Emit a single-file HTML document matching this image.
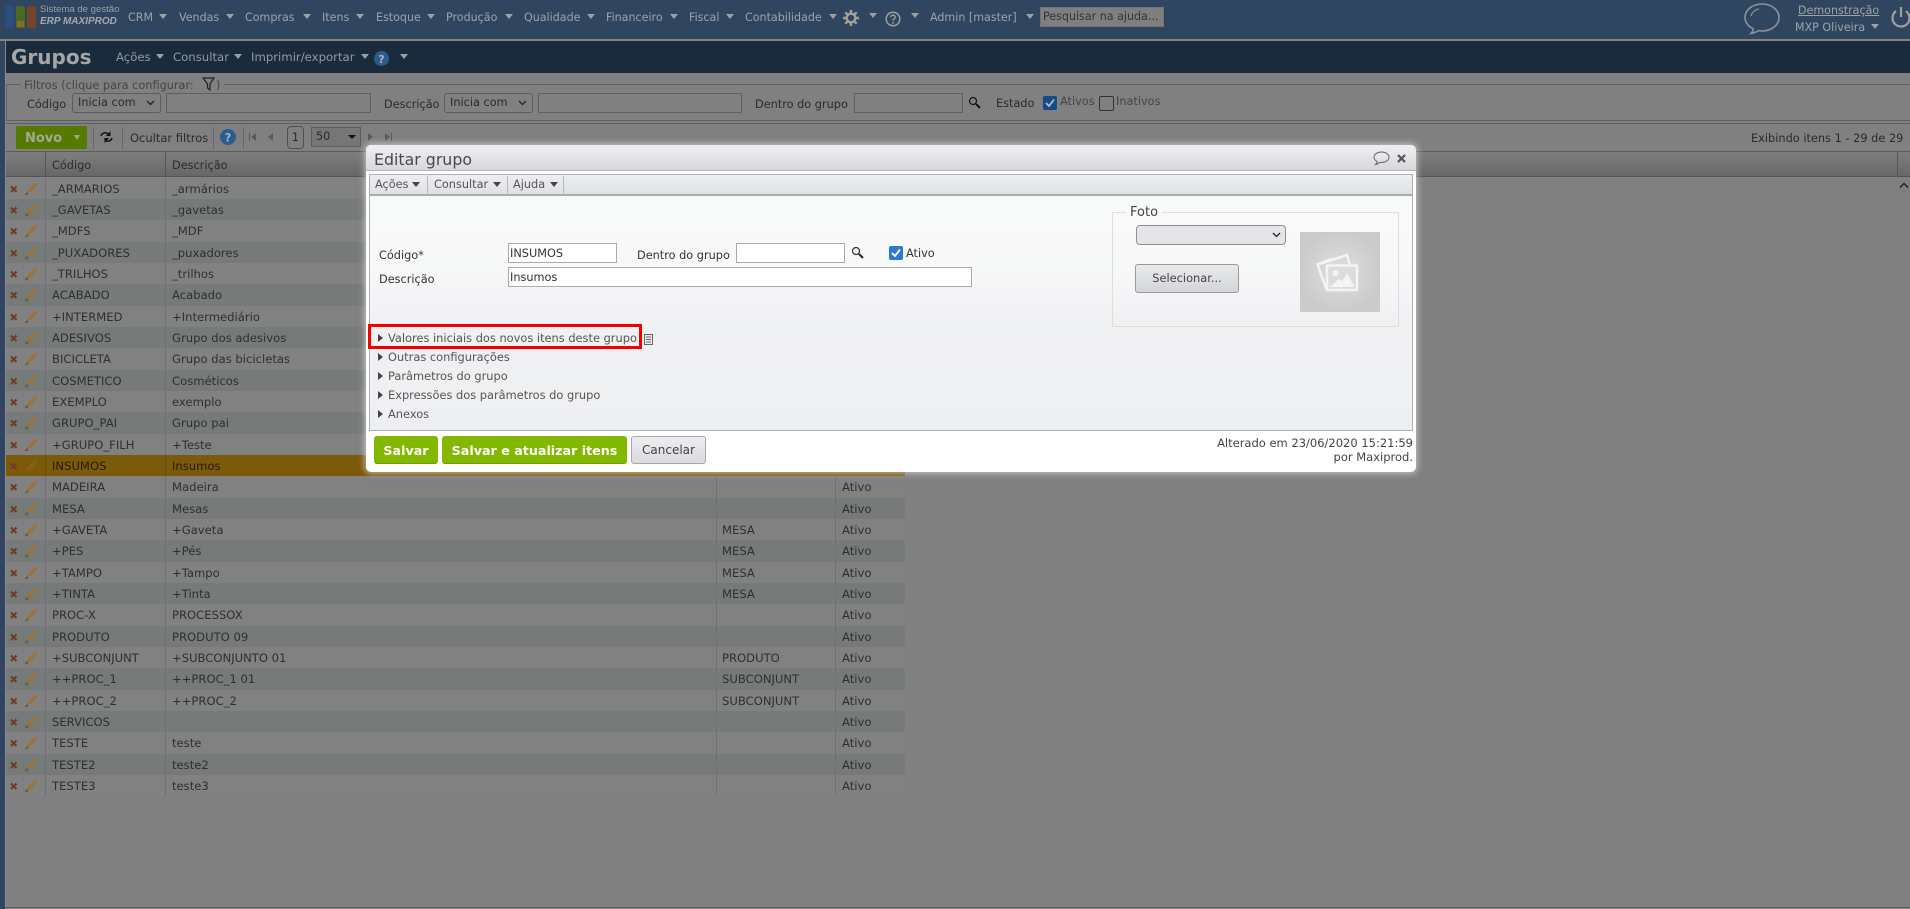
<!DOCTYPE html>
<html lang="pt"><head><meta charset="utf-8"><title>Grupos</title>
<style>
html,body{margin:0;padding:0;width:1910px;height:909px;overflow:hidden;background:#808080}
body{font:11.3px "DejaVu Sans","Liberation Sans",sans-serif;position:relative;color:#2a2a2a}
div,span,b,i,svg{position:absolute;white-space:nowrap}
.t{line-height:16px;height:16px}
.a{width:0;height:0;border-left:4px solid transparent;border-right:4px solid transparent;border-top:5px solid #a0a0a0}
.m{color:#9ea3a8;top:10px;font-size:11.1px}
.h{color:#94999e;top:49px;font-size:11.7px}
.in{background:#808080;border:1px solid #5f5f5f;box-sizing:border-box;height:20px}
.sel{background:#808080;border:1px solid #5c5c5c;border-radius:3px;box-sizing:border-box;height:20px;color:#2a2a2a;line-height:17px;padding-left:5px}
.sep{width:1px;background:#666;top:127px;height:22px}
.r{left:6px;width:899px;background:#818181}
.o{background:#767a78}
.r span{font-size:11.6px;color:#2f2f2f;top:50%;margin-top:-8px;line-height:16px}
.c1{left:46px}.c2{left:166px}.c3{left:716px}.c4{left:836px}
.r s{position:absolute;top:0;bottom:0;width:1px;background:#6f706f}
.r svg{top:4px}
.dt{color:#555;line-height:16px;height:16px}
.di{background:#fff;border:1px solid #aaa;box-sizing:border-box;height:20px;color:#333;line-height:19px;padding-left:1px}
.ac{left:22px;color:#555;font-size:11.4px;line-height:16px;height:16px}
.tr{width:0;height:0;border-top:4px solid transparent;border-bottom:4px solid transparent;border-left:5px solid #444;left:12px}
.g{background:#82b900;border-radius:3px;color:#fff;font-weight:bold;font-size:12.7px;text-align:center;height:28px;line-height:29px;top:291px;box-sizing:border-box;border-bottom:1px solid #6e9c00}
</style></head><body>

<svg width="0" height="0" style="left:0;top:0"><defs>
<g id="x"><path d="M1 1.500L6.500 7M6.500 1.500L1 7" stroke="#6e3a2c" stroke-width="2" fill="none"/></g>
<g id="p"><path d="M1.500 12.500L2.500 10L11 1.300L13 3.300L4.500 11.800Z" fill="#a0722c"/><path d="M1 13.500L2.200 10L4.700 12.300Z" fill="#5f5645"/></g>
<g id="i"><use href="#x" y="3"/><use href="#p" x="14" y="0"/></g>
</defs></svg>

<!-- top bar -->
<div style="left:0;top:0;width:1910px;height:39px;background:#2f4560"></div>
<div style="left:0;top:39px;width:1910px;height:2px;background:#858585"></div>
<div style="left:0;top:41px;width:5px;height:868px;background:#2f4560"></div>
<div style="left:5px;top:41px;width:1px;height:868px;background:#8a8a8a"></div>
<svg style="left:5px;top:6px" width="32" height="23"><rect width="9" height="22" rx="2" fill="#2a4f7e"/><rect x="11" width="9" height="22" rx="2" fill="#4a6b1e"/><rect x="22" width="9" height="22" rx="2" fill="#75452b"/><rect x="12" y="15" width="7" height="6" fill="#8a6d1e"/></svg>
<div class="t" style="left:40px;top:2px;color:#9aa0a6;font-size:9.600px;font-family:'Liberation Sans',sans-serif">Sistema de gestão</div>
<div class="t" style="left:40px;top:14px;color:#a4a8ac;font-size:10px;font-weight:bold;font-style:italic;font-family:'Liberation Sans',sans-serif">ERP MAXIPROD</div>
<div class="t m" style="left:128px">CRM</div><div class="a" style="left:159px;top:14px"></div>
<div class="t m" style="left:179px">Vendas</div><div class="a" style="left:226px;top:14px"></div>
<div class="t m" style="left:245px">Compras</div><div class="a" style="left:303px;top:14px"></div>
<div class="t m" style="left:322px">Itens</div><div class="a" style="left:356px;top:14px"></div>
<div class="t m" style="left:376px">Estoque</div><div class="a" style="left:427px;top:14px"></div>
<div class="t m" style="left:446px">Produção</div><div class="a" style="left:505px;top:14px"></div>
<div class="t m" style="left:524px">Qualidade</div><div class="a" style="left:587px;top:14px"></div>
<div class="t m" style="left:606px">Financeiro</div><div class="a" style="left:670px;top:14px"></div>
<div class="t m" style="left:689px">Fiscal</div><div class="a" style="left:726px;top:14px"></div>
<div class="t m" style="left:745px">Contabilidade</div><div class="a" style="left:829px;top:14px"></div>
<svg style="left:843px;top:10px" width="16" height="16" viewBox="0 0 16 16"><circle cx="8" cy="8" r="4.300" fill="none" stroke="#a0a0a0" stroke-width="2.400"/><path d="M8 0V3M8 13V16M0 8H3M13 8H16M2.300 2.300L4.400 4.400M11.600 11.600L13.700 13.700M13.700 2.300L11.600 4.400M4.400 11.600L2.300 13.700" stroke="#a0a0a0" stroke-width="2.400"/></svg>
<div class="a" style="left:869px;top:13px"></div>
<svg style="left:885px;top:11px" width="16" height="16" viewBox="0 0 16 16"><circle cx="8" cy="8" r="6.800" fill="none" stroke="#a0a0a0" stroke-width="1.500"/><path d="M5.800 6.200C5.900 3.500 10.200 3.600 10.200 6.100C10.200 7.800 8 7.800 8 9.800" fill="none" stroke="#a0a0a0" stroke-width="1.400"/><rect x="7.200" y="11" width="1.600" height="1.600" fill="#a0a0a0"/></svg>
<div class="a" style="left:911px;top:13px"></div>
<div class="t m" style="left:930px">Admin [master]</div><div class="a" style="left:1026px;top:14px"></div>
<div style="left:1040px;top:7px;width:124px;height:20px;background:#7f7f7f;border:1px solid #6d7680;box-sizing:border-box;color:#333;line-height:18px;padding-left:2px;font-size:11.100px">Pesquisar na ajuda...</div>
<svg style="left:1743px;top:2px" width="38" height="33" viewBox="0 0 38 33"><path d="M19 2C9.500 2 2 8 2 15.500C2 20.500 5.500 24.500 10 26.500C10.500 28.500 9.500 30 8 31.500C11.500 31 14 29.500 16 28.500C17 28.800 18 29 19 29C28.500 29 36 23 36 15.500C36 8 28.500 2 19 2Z" fill="none" stroke="#8c9298" stroke-width="1.600"/><path d="M8 14C9 10 12.500 7.500 16 7" fill="none" stroke="#8c9298" stroke-width="1.200"/></svg>
<div class="t" style="left:1798px;top:3px;color:#9ea3a8;font-size:11.100px;text-decoration:underline">Demonstração</div>
<div class="t" style="left:1795px;top:20px;color:#9ea3a8;font-size:11.100px">MXP Oliveira</div><div class="a" style="left:1871px;top:24px"></div>
<svg style="left:1891px;top:5px" width="19" height="24" viewBox="0 0 19 24"><path d="M5 6C2.500 8 1.500 10 1.500 13C1.500 18 5.500 21.500 10 21.500C14.500 21.500 18.500 18 18.500 13C18.500 10 17.500 8 15 6" fill="none" stroke="#a0a0a0" stroke-width="2.200"/><path d="M10 2V12" stroke="#a0a0a0" stroke-width="2.200"/></svg>

<!-- page header -->
<div style="left:6px;top:41px;width:1904px;height:32px;background:#1a2b3c"></div>
<div style="left:11px;top:44px;color:#a6a6a6;font-size:20px;font-weight:bold;line-height:26px">Grupos</div>
<div class="t h" style="left:116px">Ações</div><div class="a" style="left:156px;top:54px"></div>
<div class="t h" style="left:173px">Consultar</div><div class="a" style="left:234px;top:54px"></div>
<div class="t h" style="left:251px">Imprimir/exportar</div><div class="a" style="left:361px;top:54px"></div>
<svg style="left:374px;top:51px" width="15" height="15"><circle cx="7.500" cy="7.500" r="7.500" fill="#2a5c8e"/><text x="7.500" y="12" font-size="11" font-weight="bold" text-anchor="middle" fill="#a8b4c0" font-family="DejaVu Sans">?</text></svg>
<div class="a" style="left:400px;top:54px"></div>

<!-- filters -->
<div style="left:6px;top:84px;width:1904px;height:1px;background:#5f5f5f"></div>
<div style="left:6px;top:84px;width:1px;height:36px;background:#5f5f5f"></div>
<div style="left:6px;top:120px;width:1904px;height:1px;background:#5f5f5f"></div>
<div style="left:6px;top:123px;width:1904px;height:1px;background:#5f5f5f"></div>
<div class="t" style="left:21px;top:78px;background:#808080;padding:0 3px;color:#444;width:197px">Filtros (clique para configurar:</div>
<svg style="left:202px;top:77px" width="13" height="14" viewBox="0 0 13 14"><path d="M1 1H12L8 7V13L5.500 11V7Z" fill="none" stroke="#222" stroke-width="1.200"/></svg>
<div class="t" style="left:216px;top:78px;color:#444">)</div>
<div class="t" style="left:27px;top:97px">Código</div>
<div class="sel" style="left:72px;top:93px;width:89px">Inicia com</div>
<svg style="left:146px;top:100px" width="9" height="6"><path d="M1 1L4.500 4.500L8 1" fill="none" stroke="#222" stroke-width="1.300"/></svg>
<div class="in" style="left:166px;top:93px;width:205px"></div>
<div class="t" style="left:384px;top:97px">Descrição</div>
<div class="sel" style="left:444px;top:93px;width:89px">Inicia com</div>
<svg style="left:518px;top:100px" width="9" height="6"><path d="M1 1L4.500 4.500L8 1" fill="none" stroke="#222" stroke-width="1.300"/></svg>
<div class="in" style="left:538px;top:93px;width:204px"></div>
<div class="t" style="left:755px;top:97px">Dentro do grupo</div>
<div class="in" style="left:854px;top:93px;width:109px"></div>
<svg style="left:968px;top:96px" width="13" height="13" viewBox="0 0 13 13"><circle cx="5" cy="5" r="3.500" fill="none" stroke="#111" stroke-width="1.200"/><path d="M8 8L12 12" stroke="#111" stroke-width="2"/></svg>
<div class="t" style="left:996px;top:96px">Estado</div>
<svg style="left:1043px;top:96px" width="14" height="14"><rect width="14" height="14" rx="2" fill="#164a8a"/><path d="M3 7L6 10L11 3.500" fill="none" stroke="#bbb" stroke-width="1.800"/></svg>
<div class="t" style="left:1060px;top:94px;color:#444">Ativos</div>
<div style="left:1099px;top:96px;width:13px;height:13px;border:1px solid #333;border-radius:2px;box-sizing:content-box"></div>
<div class="t" style="left:1116px;top:94px;color:#444">Inativos</div>

<!-- toolbar -->
<div style="left:16px;top:126px;width:71px;height:23px;background:#567a00;border-radius:2px"></div>
<div class="t" style="left:25px;top:131px;color:#a3a79a;font-weight:bold;font-size:13px">Novo</div>
<div style="left:74px;top:135px;width:0;height:0;border-left:3px solid transparent;border-right:3px solid transparent;border-top:5px solid #a0a890"></div>
<div class="sep" style="left:93px"></div>
<svg style="left:100px;top:131px" width="13" height="12" viewBox="0 0 13 12"><path d="M1 5C2 1.500 6 1 8 3M12 7C11 10.500 7 11 5 9" fill="none" stroke="#111" stroke-width="1.500"/><path d="M9.500 0V5H5ZM3.500 12V7H8Z" fill="#111" transform="translate(1 0)"/></svg>
<div class="sep" style="left:122px"></div>
<div class="t" style="left:130px;top:130px;font-size:11.500px">Ocultar filtros</div>
<div class="sep" style="left:213px"></div>
<svg style="left:220px;top:129px" width="16" height="16"><circle cx="8" cy="8" r="8" fill="#2a5c8e"/><text x="8" y="12.500" font-size="11.500" font-weight="bold" text-anchor="middle" fill="#a8b4c0" font-family="DejaVu Sans">?</text></svg>
<div class="sep" style="left:243px"></div>
<svg style="left:249px;top:132px" width="26" height="10"><rect x="0" y="1" width="1" height="8" fill="#5a5a5a"/><path d="M7 1V9L2 5ZM24 1V9L19 5Z" fill="#5a5a5a"/></svg>
<div style="left:287px;top:126px;width:17px;height:23px;border:1px solid #505050;border-radius:4px;box-sizing:border-box;text-align:center;line-height:22px">1</div>
<div style="left:311px;top:127px;width:50px;height:20px;background:#767676;border:1px solid #5c5c5c;box-sizing:border-box;padding-left:4px;line-height:17px">50</div>
<div style="left:348px;top:135px;width:0;height:0;border-left:4px solid transparent;border-right:4px solid transparent;border-top:4px solid #111"></div>
<svg style="left:367px;top:132px" width="26" height="10"><path d="M1 1V9L6 5ZM18 1V9L23 5Z" fill="#5a5a5a"/><rect x="24" y="1" width="1" height="8" fill="#5a5a5a"/></svg>
<div class="t" style="left:1751px;top:130px;font-size:11.350px">Exibindo itens 1 - 29 de 29</div>

<!-- table header -->
<div style="left:6px;top:151px;width:1904px;height:26px;background:linear-gradient(#7e7e7e,#676767);border-top:1px solid #5c5c5c;border-bottom:1px solid #555;box-sizing:border-box"></div>
<div style="left:45px;top:151px;width:1px;height:26px;background:#565656"></div>
<div style="left:165px;top:151px;width:1px;height:26px;background:#565656"></div>
<div style="left:1897px;top:151px;width:1px;height:26px;background:#565656"></div>
<div class="t" style="left:52px;top:158px;font-size:11.300px">Código</div>
<div class="t" style="left:172px;top:158px;font-size:11.300px">Descrição</div>
<svg style="left:1899px;top:182px" width="10" height="7"><path d="M1 5.500L5 1.500L9 5.500" fill="none" stroke="#222" stroke-width="1.500"/></svg>
<div style="left:5px;top:907px;width:1905px;height:1px;background:#5a6068"></div>

<!-- rows -->
<div class="r" style="top:178px;height:21px"><svg style="left:4px" width="34" height="15"><use href="#i"/></svg><s style="left:39px"></s><s style="left:159px"></s><s style="left:710px"></s><s style="left:829px"></s><span class="c1">_ARMARIOS</span><span class="c2">_armários</span></div>
<div class="r o" style="top:199px;height:21px"><svg style="left:4px" width="34" height="15"><use href="#i"/></svg><s style="left:39px"></s><s style="left:159px"></s><s style="left:710px"></s><s style="left:829px"></s><span class="c1">_GAVETAS</span><span class="c2">_gavetas</span></div>
<div class="r" style="top:220px;height:22px"><svg style="left:4px" width="34" height="15"><use href="#i"/></svg><s style="left:39px"></s><s style="left:159px"></s><s style="left:710px"></s><s style="left:829px"></s><span class="c1">_MDFS</span><span class="c2">_MDF</span></div>
<div class="r o" style="top:242px;height:21px"><svg style="left:4px" width="34" height="15"><use href="#i"/></svg><s style="left:39px"></s><s style="left:159px"></s><s style="left:710px"></s><s style="left:829px"></s><span class="c1">_PUXADORES</span><span class="c2">_puxadores</span></div>
<div class="r" style="top:263px;height:21px"><svg style="left:4px" width="34" height="15"><use href="#i"/></svg><s style="left:39px"></s><s style="left:159px"></s><s style="left:710px"></s><s style="left:829px"></s><span class="c1">_TRILHOS</span><span class="c2">_trilhos</span></div>
<div class="r o" style="top:284px;height:22px"><svg style="left:4px" width="34" height="15"><use href="#i"/></svg><s style="left:39px"></s><s style="left:159px"></s><s style="left:710px"></s><s style="left:829px"></s><span class="c1">ACABADO</span><span class="c2">Acabado</span></div>
<div class="r" style="top:306px;height:21px"><svg style="left:4px" width="34" height="15"><use href="#i"/></svg><s style="left:39px"></s><s style="left:159px"></s><s style="left:710px"></s><s style="left:829px"></s><span class="c1">+INTERMED</span><span class="c2">+Intermediário</span></div>
<div class="r o" style="top:327px;height:21px"><svg style="left:4px" width="34" height="15"><use href="#i"/></svg><s style="left:39px"></s><s style="left:159px"></s><s style="left:710px"></s><s style="left:829px"></s><span class="c1">ADESIVOS</span><span class="c2">Grupo dos adesivos</span></div>
<div class="r" style="top:348px;height:22px"><svg style="left:4px" width="34" height="15"><use href="#i"/></svg><s style="left:39px"></s><s style="left:159px"></s><s style="left:710px"></s><s style="left:829px"></s><span class="c1">BICICLETA</span><span class="c2">Grupo das bicicletas</span></div>
<div class="r o" style="top:370px;height:21px"><svg style="left:4px" width="34" height="15"><use href="#i"/></svg><s style="left:39px"></s><s style="left:159px"></s><s style="left:710px"></s><s style="left:829px"></s><span class="c1">COSMETICO</span><span class="c2">Cosméticos</span></div>
<div class="r" style="top:391px;height:21px"><svg style="left:4px" width="34" height="15"><use href="#i"/></svg><s style="left:39px"></s><s style="left:159px"></s><s style="left:710px"></s><s style="left:829px"></s><span class="c1">EXEMPLO</span><span class="c2">exemplo</span></div>
<div class="r o" style="top:412px;height:22px"><svg style="left:4px" width="34" height="15"><use href="#i"/></svg><s style="left:39px"></s><s style="left:159px"></s><s style="left:710px"></s><s style="left:829px"></s><span class="c1">GRUPO_PAI</span><span class="c2">Grupo pai</span></div>
<div class="r" style="top:434px;height:21px"><svg style="left:4px" width="34" height="15"><use href="#i"/></svg><s style="left:39px"></s><s style="left:159px"></s><s style="left:710px"></s><s style="left:829px"></s><span class="c1">+GRUPO_FILH</span><span class="c2">+Teste</span></div>
<div class="r" style="top:455px;height:21px;background:#7c5a0c"><svg style="left:4px" width="34" height="15"><use href="#x" y="3"/><use href="#p" x="14" opacity=".35"/></svg><s style="left:39px;background:#6a4d0a"></s><s style="left:159px;background:#6a4d0a"></s><span class="c1" style="color:#241a04">INSUMOS</span><span class="c2" style="color:#241a04">Insumos</span></div>
<div class="r" style="top:476px;height:22px"><svg style="left:4px" width="34" height="15"><use href="#i"/></svg><s style="left:39px"></s><s style="left:159px"></s><s style="left:710px"></s><s style="left:829px"></s><span class="c1">MADEIRA</span><span class="c2">Madeira</span><span class="c4">Ativo</span></div>
<div class="r o" style="top:498px;height:21px"><svg style="left:4px" width="34" height="15"><use href="#i"/></svg><s style="left:39px"></s><s style="left:159px"></s><s style="left:710px"></s><s style="left:829px"></s><span class="c1">MESA</span><span class="c2">Mesas</span><span class="c4">Ativo</span></div>
<div class="r" style="top:519px;height:21px"><svg style="left:4px" width="34" height="15"><use href="#i"/></svg><s style="left:39px"></s><s style="left:159px"></s><s style="left:710px"></s><s style="left:829px"></s><span class="c1">+GAVETA</span><span class="c2">+Gaveta</span><span class="c3">MESA</span><span class="c4">Ativo</span></div>
<div class="r o" style="top:540px;height:22px"><svg style="left:4px" width="34" height="15"><use href="#i"/></svg><s style="left:39px"></s><s style="left:159px"></s><s style="left:710px"></s><s style="left:829px"></s><span class="c1">+PES</span><span class="c2">+Pés</span><span class="c3">MESA</span><span class="c4">Ativo</span></div>
<div class="r" style="top:562px;height:21px"><svg style="left:4px" width="34" height="15"><use href="#i"/></svg><s style="left:39px"></s><s style="left:159px"></s><s style="left:710px"></s><s style="left:829px"></s><span class="c1">+TAMPO</span><span class="c2">+Tampo</span><span class="c3">MESA</span><span class="c4">Ativo</span></div>
<div class="r o" style="top:583px;height:21px"><svg style="left:4px" width="34" height="15"><use href="#i"/></svg><s style="left:39px"></s><s style="left:159px"></s><s style="left:710px"></s><s style="left:829px"></s><span class="c1">+TINTA</span><span class="c2">+Tinta</span><span class="c3">MESA</span><span class="c4">Ativo</span></div>
<div class="r" style="top:604px;height:22px"><svg style="left:4px" width="34" height="15"><use href="#i"/></svg><s style="left:39px"></s><s style="left:159px"></s><s style="left:710px"></s><s style="left:829px"></s><span class="c1">PROC-X</span><span class="c2">PROCESSOX</span><span class="c4">Ativo</span></div>
<div class="r o" style="top:626px;height:21px"><svg style="left:4px" width="34" height="15"><use href="#i"/></svg><s style="left:39px"></s><s style="left:159px"></s><s style="left:710px"></s><s style="left:829px"></s><span class="c1">PRODUTO</span><span class="c2">PRODUTO 09</span><span class="c4">Ativo</span></div>
<div class="r" style="top:647px;height:21px"><svg style="left:4px" width="34" height="15"><use href="#i"/></svg><s style="left:39px"></s><s style="left:159px"></s><s style="left:710px"></s><s style="left:829px"></s><span class="c1">+SUBCONJUNT</span><span class="c2">+SUBCONJUNTO 01</span><span class="c3">PRODUTO</span><span class="c4">Ativo</span></div>
<div class="r o" style="top:668px;height:22px"><svg style="left:4px" width="34" height="15"><use href="#i"/></svg><s style="left:39px"></s><s style="left:159px"></s><s style="left:710px"></s><s style="left:829px"></s><span class="c1">++PROC_1</span><span class="c2">++PROC_1 01</span><span class="c3">SUBCONJUNT</span><span class="c4">Ativo</span></div>
<div class="r" style="top:690px;height:21px"><svg style="left:4px" width="34" height="15"><use href="#i"/></svg><s style="left:39px"></s><s style="left:159px"></s><s style="left:710px"></s><s style="left:829px"></s><span class="c1">++PROC_2</span><span class="c2">++PROC_2</span><span class="c3">SUBCONJUNT</span><span class="c4">Ativo</span></div>
<div class="r o" style="top:711px;height:21px"><svg style="left:4px" width="34" height="15"><use href="#i"/></svg><s style="left:39px"></s><s style="left:159px"></s><s style="left:710px"></s><s style="left:829px"></s><span class="c1">SERVICOS</span><span class="c4">Ativo</span></div>
<div class="r" style="top:732px;height:22px"><svg style="left:4px" width="34" height="15"><use href="#i"/></svg><s style="left:39px"></s><s style="left:159px"></s><s style="left:710px"></s><s style="left:829px"></s><span class="c1">TESTE</span><span class="c2">teste</span><span class="c4">Ativo</span></div>
<div class="r o" style="top:754px;height:21px"><svg style="left:4px" width="34" height="15"><use href="#i"/></svg><s style="left:39px"></s><s style="left:159px"></s><s style="left:710px"></s><s style="left:829px"></s><span class="c1">TESTE2</span><span class="c2">teste2</span><span class="c4">Ativo</span></div>
<div class="r" style="top:775px;height:21px"><svg style="left:4px" width="34" height="15"><use href="#i"/></svg><s style="left:39px"></s><s style="left:159px"></s><s style="left:710px"></s><s style="left:829px"></s><span class="c1">TESTE3</span><span class="c2">teste3</span><span class="c4">Ativo</span></div>

<!-- modal -->
<div style="left:366px;top:145px;width:1050px;height:327px;background:#fff;border-radius:5px;box-shadow:0 0 7px 1px rgba(225,225,225,.75);overflow:hidden">
  <div style="left:0;top:0;width:1050px;height:25px;background:linear-gradient(#eef0f2,#d6d8dc);border-bottom:1px solid #b2b5ba"></div>
  <div style="left:8px;top:3px;color:#4a4a4a;font-size:15.800px;line-height:24px">Editar grupo</div>
  <svg style="left:1007px;top:6px" width="17" height="15" viewBox="0 0 17 15"><path d="M8.500 1C4.500 1 1 3.200 1 6.200C1 8 2.200 9.500 4 10.300C4 11.700 3.400 12.700 2.500 13.500C4.300 13.200 5.700 12.300 6.500 11.400L8.500 11.500C12.500 11.500 16 9.200 16 6.200C16 3.200 12.500 1 8.500 1Z" fill="none" stroke="#666" stroke-width="1"/></svg>
  <svg style="left:1031px;top:9px" width="9" height="9"><path d="M1 1L8 8M8 1L1 8" stroke="#555" stroke-width="2.200"/></svg>

  <!-- inner box -->
  <div style="left:3px;top:29px;width:1044px;height:257px;border:1px solid #aeb2b8;box-sizing:border-box;background:linear-gradient(#f9fafa 0,#f7f8f8 90px,#f0f1f3 150px,#eeeff2 100%)"></div>
  <div style="left:4px;top:30px;width:1042px;height:21px;background:linear-gradient(#eceef0,#dfe1e4);border-bottom:2px solid #a9adb3;box-sizing:border-box"></div>
  <div style="left:61px;top:31px;width:1px;height:19px;background:#b5b8bc"></div>
  <div style="left:141px;top:31px;width:1px;height:19px;background:#b5b8bc"></div>
  <div style="left:197px;top:31px;width:1px;height:19px;background:#b5b8bc"></div>
  <div class="dt" style="left:9px;top:32px">Ações</div><div class="a" style="left:46px;top:37px;border-top-color:#444"></div>
  <div class="dt" style="left:68px;top:32px">Consultar</div><div class="a" style="left:127px;top:37px;border-top-color:#444"></div>
  <div class="dt" style="left:147px;top:32px">Ajuda</div><div class="a" style="left:184px;top:37px;border-top-color:#444"></div>

  <!-- form -->
  <div class="t" style="left:13px;top:103px;color:#333">Código*</div>
  <div class="di" style="left:142px;top:98px;width:109px">INSUMOS</div>
  <div class="t" style="left:271px;top:103px;color:#333">Dentro do grupo</div>
  <div class="di" style="left:370px;top:98px;width:109px"></div>
  <svg style="left:485px;top:101px" width="13" height="13" viewBox="0 0 13 13"><circle cx="5" cy="5" r="3.500" fill="none" stroke="#333" stroke-width="1.200"/><path d="M8 8L12 12" stroke="#222" stroke-width="2"/></svg>
  <svg style="left:523px;top:101px" width="14" height="14"><rect width="14" height="14" rx="2" fill="#2c79d0"/><path d="M3 7L6 10L11 3.500" fill="none" stroke="#fff" stroke-width="1.900"/></svg>
  <div class="t" style="left:540px;top:101px;color:#333">Ativo</div>
  <div class="t" style="left:13px;top:127px;color:#333">Descrição</div>
  <div class="di" style="left:142px;top:122px;width:464px">Insumos</div>

  <!-- foto -->
  <div style="left:746px;top:67px;width:287px;height:115px;border:1px solid #ddd;box-sizing:border-box"></div>
  <div style="left:760px;top:60px;padding:0 4px;background:#f8f9f9;color:#444;font-size:13px;line-height:16px">Foto</div>
  <div style="left:770px;top:80px;width:150px;height:20px;border:1px solid #8f8f8f;border-radius:4px;box-sizing:border-box;background:#e4e5e8"></div>
  <svg style="left:906px;top:87px" width="9" height="6"><path d="M1 1L4.500 4.500L8 1" fill="none" stroke="#222" stroke-width="1.300"/></svg>
  <div style="left:769px;top:119px;width:104px;height:29px;border:1px solid #999;border-radius:3px;box-sizing:border-box;background:linear-gradient(#e9eaed,#d3d5d9);color:#444;text-align:center;line-height:27px;font-size:11.400px">Selecionar...</div>
  <svg style="left:934px;top:87px" width="80" height="80" viewBox="0 0 80 80"><defs><radialGradient id="gg" cx="50%" cy="50%" r="50%"><stop offset="0" stop-color="#e0e0e0"/><stop offset="1" stop-color="#cbcbcb"/></radialGradient></defs><rect width="80" height="80" fill="url(#gg)"/><path d="M31 27L17.500 32.500L26 56" fill="none" stroke="#f4f4f4" stroke-width="2.500"/><path d="M17.500 32.500L47 23L50 33" fill="none" stroke="#f4f4f4" stroke-width="2.500"/><rect x="27" y="33.500" width="30" height="24.500" fill="#dcdcdc" stroke="#f4f4f4" stroke-width="2.500"/><circle cx="35.500" cy="41" r="3" fill="#f4f4f4"/><path d="M30 55L39 47L42 49L47.500 41.500L54.500 55Z" fill="#f4f4f4"/></svg>

  <!-- accordions -->
  <div class="tr" style="top:189px"></div><div class="ac" style="top:185px">Valores iniciais dos novos itens deste grupo</div>
  <div style="left:2px;top:179px;width:274px;height:25px;border:3px solid #f50000;box-sizing:border-box"></div>
  <svg style="left:278px;top:189px" width="9" height="11"><rect x=".5" y=".5" width="8" height="10" fill="#eee" stroke="#666"/><path d="M2 3H7M2 5.500H7M2 8H7" stroke="#666"/></svg>
  <div class="tr" style="top:208px"></div><div class="ac" style="top:204px">Outras configurações</div>
  <div class="tr" style="top:227px"></div><div class="ac" style="top:223px">Parâmetros do grupo</div>
  <div class="tr" style="top:246px"></div><div class="ac" style="top:242px">Expressões dos parâmetros do grupo</div>
  <div class="tr" style="top:265px"></div><div class="ac" style="top:261px">Anexos</div>

  <!-- buttons -->
  <div class="g" style="left:8px;width:64px">Salvar</div>
  <div class="g" style="left:76px;width:185px">Salvar e atualizar itens</div>
  <div style="left:265px;top:291px;width:75px;height:28px;border:1px solid #a8a8a8;border-radius:3px;box-sizing:border-box;background:linear-gradient(#eceef0,#d8dade);color:#444;text-align:center;line-height:27px;font-size:12px">Cancelar</div>
  <div style="right:3px;top:291px;text-align:right;color:#444;font-size:11.500px;line-height:14px">Alterado em 23/06/2020 15:21:59<br>por Maxiprod.</div>
</div>
</body></html>
